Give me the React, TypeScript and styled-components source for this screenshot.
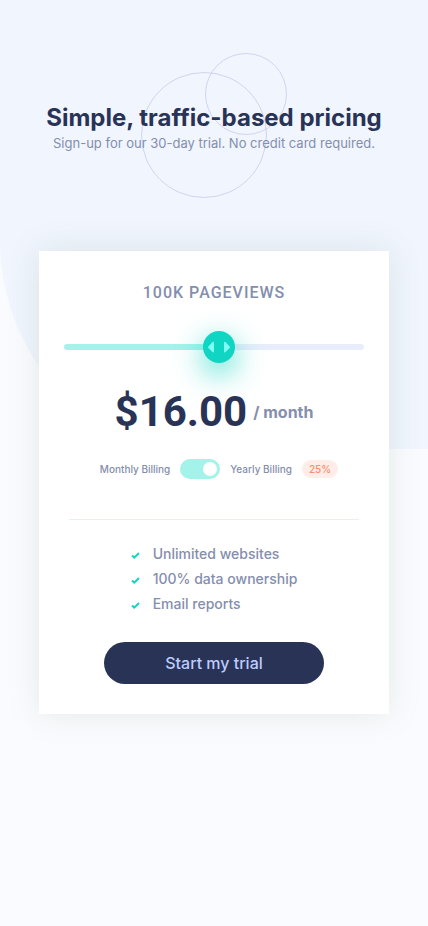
import React, { useState } from 'react';
import styled, { createGlobalStyle } from 'styled-components';

const color = {
  ink: '#293356',
  muted: '#848ead',
  cyan: '#10d5c2',
  softCyan: '#a4f3eb',
  track: '#e9edfb',
  page: '#fafbff',
  pattern: '#f0f5fe',
  ring: '#cfd5ee',
};

const narrowFont = "Roboto, Inter, sans-serif";

const GlobalStyle = createGlobalStyle`
  * { box-sizing: border-box; }
  body {
    margin: 0;
    background: ${color.page};
    color: ${color.muted};
    font-family: Inter, 'Open Sans', sans-serif;
    font-size: 16px;
  }
`;

const Page = styled.div`
  position: relative;
  isolation: isolate;
  min-height: 100vh;
  display: flex;
  flex-direction: column;
  align-items: center;
  padding: 53px 16px 40px;
`;

const Pattern = styled.div`
  position: absolute;
  z-index: -1;
  top: 0;
  left: 0;
  right: 0;
  height: 449px;
  background: ${color.pattern};
  border-bottom-left-radius: 190px 210px;
`;

const Header = styled.header`
  position: relative;
  height: 146px;
  width: 100%;
  padding-top: 49px;
  text-align: center;
`;

const Rings = styled.svg`
  position: absolute;
  z-index: -1;
  top: 0;
  left: 50%;
  margin-left: -73px;
  fill: none;
  stroke: ${color.ring};
`;

const Title = styled.h1`
  margin: 0;
  color: ${color.ink};
  font-size: 24px;
  line-height: 32px;
  font-weight: 700;
`;

const Subtitle = styled.p`
  margin: 0;
  font-size: 13px;
  line-height: 18px;
  font-weight: 400;
`;

const Card = styled.main`
  width: 100%;
  max-width: 350px;
  margin-top: 52px;
  padding: 30px 25px;
  background: #fff;
  box-shadow: 0 0 30px rgba(120, 140, 100, 0.16);
  display: flex;
  flex-direction: column;
  align-items: center;
`;

const Pageviews = styled.label`
  font-family: ${narrowFont};
  font-size: 16px;
  line-height: 24px;
  font-weight: 500;
  letter-spacing: 1px;
`;

const arrows =
  "url(\"data:image/svg+xml,%3Csvg xmlns='http://www.w3.org/2000/svg' width='22' height='13'%3E%3Cg fill='%2380fff3'%3E%3Cpath d='M6 1.5v9.2c0 1-.9 1-1.5.4L.4 7c-.5-.5-.5-1.1 0-1.6L4.5 1.1C5.1.5 6 .6 6 1.5zM16 1.5v9.2c0 1 .9 1 1.5.4L21.6 7c.5-.5.5-1.1 0-1.6L17.5 1.1C16.9.5 16 .6 16 1.5z'/%3E%3C/g%3E%3C/svg%3E\")";

const Slider = styled.input<{ $fill: number }>`
  appearance: none;
  width: 100%;
  height: 32px;
  margin: 26px 0 0;
  background: none;
  cursor: pointer;

  &::-webkit-slider-runnable-track {
    height: 6px;
    border-radius: 3px;
    background: linear-gradient(
      to right,
      ${color.softCyan} ${(p) => p.$fill}%,
      ${color.track} ${(p) => p.$fill}%
    );
  }
  &::-webkit-slider-thumb {
    appearance: none;
    width: 32px;
    height: 32px;
    margin-top: -13px;
    border: 0;
    border-radius: 50%;
    background: ${arrows} center / 22px 13px no-repeat ${color.cyan};
    box-shadow: 0 10px 30px rgba(16, 213, 194, 0.8);
  }
`;

const Price = styled.p`
  display: flex;
  align-items: center;
  gap: 6px;
  margin: 20px 0 0;
  line-height: 58px;
`;

const Amount = styled.strong`
  color: ${color.ink};
  font-family: ${narrowFont};
  font-size: 42px;
  font-weight: 700;
`;

const Period = styled.span`
  font-size: 16px;
  font-weight: 700;
`;

const Billing = styled.div`
  display: flex;
  align-items: center;
  gap: 10px;
  margin: 18px 0 0 10px;
  font-size: 10px;
  line-height: 20px;
  font-weight: 500;
  white-space: nowrap;
`;

const Toggle = styled.input`
  appearance: none;
  width: 40px;
  height: 20px;
  margin: 0;
  padding: 3px;
  border-radius: 10px;
  background: ${color.softCyan};
  display: flex;
  cursor: pointer;

  &::before {
    content: '';
    width: 14px;
    height: 14px;
    border-radius: 50%;
    background: #fff;
  }
  &:checked {
    justify-content: flex-end;
  }
`;

const Discount = styled.span`
  padding: 0 7px;
  border-radius: 9px;
  background: #feede8;
  color: #ff8d68;
  line-height: 18px;
`;

const Divider = styled.hr`
  width: calc(100% - 10px);
  height: 1px;
  margin: 40px 0 0;
  border: 0;
  background: #eaeefb;
`;

const Features = styled.ul`
  list-style: none;
  margin: 21px 0 0;
  padding: 0;
`;

const Feature = styled.li`
  display: flex;
  align-items: center;
  gap: 13px;
  font-size: 14px;
  line-height: 25px;
  font-weight: 500;
`;

const Check = styled.svg`
  fill: none;
  stroke: ${color.cyan};
  stroke-width: 2;
`;

const StartButton = styled.button`
  width: 220px;
  max-width: 100%;
  height: 42px;
  margin-top: 26px;
  border: 0;
  border-radius: 21px;
  background: ${color.ink};
  color: #bdccff;
  font: 500 16px/22px Inter, sans-serif;
  cursor: pointer;
`;

const plans = [
  { views: '10K', price: 8 },
  { views: '50K', price: 12 },
  { views: '100K', price: 16 },
  { views: '500K', price: 24 },
  { views: '1M', price: 36 },
];

const features = ['Unlimited websites', '100% data ownership', 'Email reports'];

export default function App() {
  const [position, setPosition] = useState(52);
  const [yearly, setYearly] = useState(true);
  const plan = plans[Math.min(4, Math.floor(position / 20))];

  return (
    <Page>
      <GlobalStyle />
      <Pattern />
      <Header>
        <Rings width="146" height="146" aria-hidden="true">
          <circle cx="63" cy="82" r="62.5" />
          <circle cx="105" cy="41" r="40.5" />
        </Rings>
        <Title>Simple, traffic-based pricing</Title>
        <Subtitle>Sign-up for our 30-day trial. No credit card required.</Subtitle>
      </Header>
      <Card>
        <Pageviews htmlFor="views">{plan.views} PAGEVIEWS</Pageviews>
        <Slider
          id="views"
          type="range"
          min={0}
          max={100}
          value={position}
          $fill={position}
          onChange={(e) => setPosition(Number(e.target.value))}
        />
        <Price>
          <Amount>${plan.price.toFixed(2)}</Amount>
          <Period>/ month</Period>
        </Price>
        <Billing>
          <label htmlFor="billing">Monthly Billing</label>
          <Toggle
            id="billing"
            type="checkbox"
            role="switch"
            checked={yearly}
            onChange={(e) => setYearly(e.target.checked)}
          />
          <label htmlFor="billing">Yearly Billing</label>
          <Discount>25%</Discount>
        </Billing>
        <Divider />
        <Features>
          {features.map((text) => (
            <Feature key={text}>
              <Check width="9" height="10" viewBox="0 0 9 10" aria-hidden="true">
                <path d="M1 6.6 3.2 8.6 8 4" />
              </Check>
              {text}
            </Feature>
          ))}
        </Features>
        <StartButton type="button">Start my trial</StartButton>
      </Card>
    </Page>
  );
}
